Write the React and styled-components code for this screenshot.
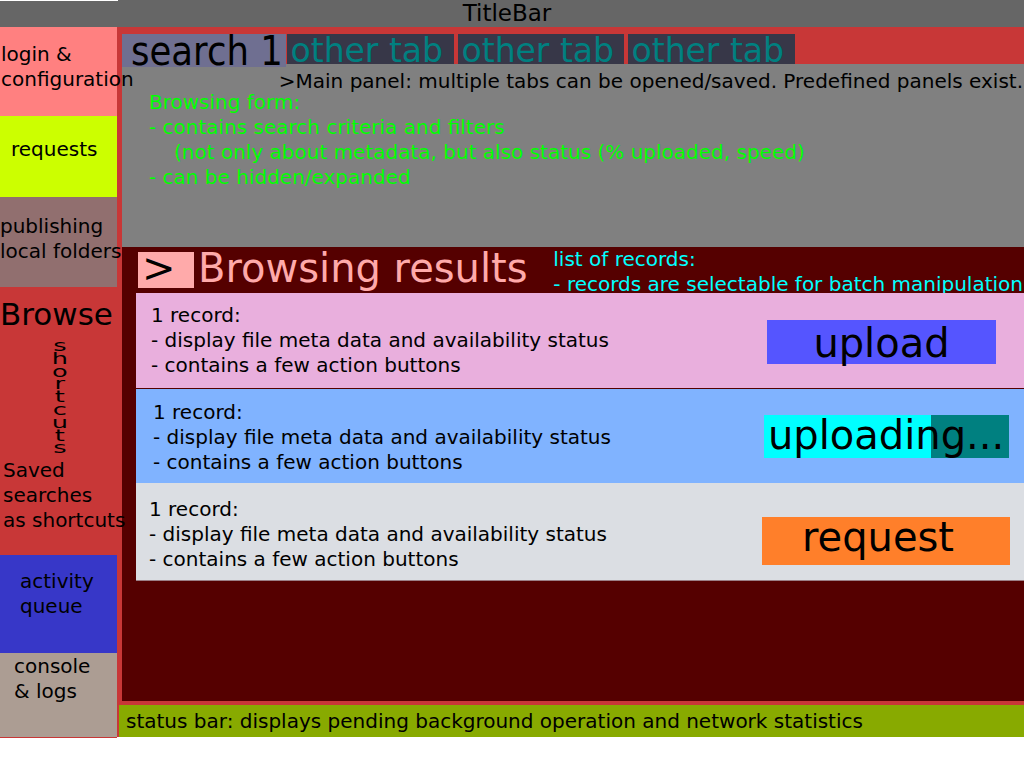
import React from 'react';
import styled, { createGlobalStyle } from 'styled-components';

const Global = createGlobalStyle`
  html, body { margin: 0; padding: 0; background: #ffffff; }
  body { font-family: "DejaVu Sans", "Noto Sans", sans-serif; color: #000; }
  * { box-sizing: border-box; }
`;

const Frame = styled.div`
  width: 1024px;
  display: flex;
  flex-direction: column;
`;

const TitleBar = styled.div`
  height: 27px;
  background: linear-gradient(#fff, #fff) 0 0 / 118px 1px no-repeat, #666666;
  text-align: center;
  padding-right: 10px;
  font-size: 23px;
  line-height: 27px;
`;

const Body = styled.div`
  display: flex;
  align-items: flex-start;
`;

const Sidebar = styled.div`
  width: 117px;
  flex-shrink: 0;
  display: flex;
  flex-direction: column;
  background: #c83737;
  border-bottom: 1px solid #c83737;
  position: relative;
  z-index: 2;
  font-size: 20px;
  line-height: 25px;
  white-space: nowrap;
`;

const SideSection = styled.div`
  height: ${p => p.$h}px;
  background: ${p => p.$bg || 'transparent'};
  padding: ${p => p.$pt || 0}px 0 0 ${p => p.$pl || 0}px;
  display: flex;
  flex-direction: column;
`;

const BrowseTitle = styled.div`
  font-size: 31px;
  line-height: 36px;
`;

const ShortcutsSlot = styled.div`
  height: 112px;
  margin-top: 7px;
  display: flex;
  justify-content: center;
`;

const Shortcuts = styled.div`
  writing-mode: vertical-rl;
  text-orientation: upright;
  font-size: 16px;
  line-height: 16px;
  letter-spacing: -6.2px;
  transform: scaleX(1.6);
  margin-top: -3px;
`;

const SavedNote = styled.div`
  margin-top: 7px;
  padding-left: 3px;
`;

const Main = styled.div`
  flex: 1;
  height: 710px;
  background: #c83737;
  padding: 7px 0 0 5px;
  display: flex;
  flex-direction: column;
`;

const TabRow = styled.div`
  height: 30px;
  flex-shrink: 0;
  display: flex;
  align-items: flex-start;
`;

const Tab = styled.div`
  width: ${p => p.$w}px;
  height: ${p => (p.$active ? 33 : 30)}px;
  margin-left: ${p => p.$ml || 0}px;
  background: ${p => (p.$active ? '#6f6f91' : '#373748')};
  color: ${p => (p.$active ? '#000000' : '#008080')};
  font-size: ${p => (p.$active ? 35.5 : 33)}px;
  line-height: 30px;
  padding: ${p => (p.$active ? '2px 0 0 9px' : '1.5px 0 0 3.5px')};
  white-space: nowrap;
  position: ${p => (p.$active ? 'relative' : 'static')};
  z-index: ${p => (p.$active ? 1 : 'auto')};
`;

const TabLabel = styled.span`
  display: inline-block;
  transform: scaleY(${p => p.$sy || 1});
`;

const FormPanel = styled.div`
  height: 183px;
  flex-shrink: 0;
  background: #808080;
  padding-top: 9px;
  font-size: 20px;
`;

const PanelNote = styled.div`
  line-height: 17px;
  text-align: right;
  padding-right: 1px;
  white-space: nowrap;
`;

const FormNotes = styled.div`
  color: #00ff00;
  line-height: 25px;
  padding-left: 27px;
  white-space: nowrap;
`;

const NoteLine = styled.div`
  padding-left: ${p => p.$indent || 0}px;
`;

const ResultsPanel = styled.div`
  flex: 1;
  background: #550000;
  padding-left: 14px;
  display: flex;
  flex-direction: column;
`;

const ResultsHeader = styled.div`
  height: 46px;
  flex-shrink: 0;
  display: flex;
  align-items: flex-start;
`;

const ToggleBox = styled.div`
  width: 56px;
  height: 36px;
  margin: 5px 0 0 2px;
  background: #ffaaaa;
  font-size: 40px;
  line-height: 33px;
  padding-left: 4px;
`;

const ResultsTitle = styled.div`
  color: #ffaaaa;
  font-size: 40px;
  line-height: 42px;
  margin-left: 4px;
  white-space: nowrap;
`;

const ListNote = styled.div`
  margin-left: auto;
  padding-right: 1px;
  color: #00ffff;
  font-size: 20px;
  line-height: 24.5px;
  white-space: nowrap;
`;

const RecordList = styled.div`
  display: flex;
  flex-direction: column;
`;

const Record = styled.div`
  height: ${p => p.$h}px;
  margin-bottom: ${p => p.$mb || 0}px;
  background: ${p => p.$bg};
  border-bottom: ${p => (p.$edge ? '1px solid #9c7f86' : 'none')};
  display: flex;
  align-items: flex-start;
  justify-content: space-between;
`;

const RecordText = styled.div`
  padding: ${p => p.$pt}px 0 0 ${p => p.$pl}px;
  font-size: 20px;
  line-height: 25px;
  white-space: nowrap;
`;

const ActionButton = styled.div`
  width: ${p => p.$w}px;
  height: ${p => p.$h}px;
  margin: ${p => p.$mt}px ${p => p.$mr}px 0 0;
  flex-shrink: 0;
  background: ${p =>
    p.$progress != null
      ? `linear-gradient(to right, #00ffff 0 ${p.$progress}%, #008080 ${p.$progress}% 100%)`
      : p.$bg};
  font-size: 40px;
  line-height: 40px;
  padding: ${p => p.$pt || 0}px ${p => p.$pr || 0}px 0 ${p => p.$pl || 0}px;
  text-align: ${p => p.$align || 'center'};
  white-space: nowrap;
`;

const StatusBar = styled.div`
  height: 32px;
  flex-shrink: 0;
  margin: 4px 0 0 -3px;
  background: #88aa00;
  font-size: 20px;
  line-height: 25px;
  padding: 4px 0 0 7px;
  white-space: nowrap;
`;

const RecordBody = () => (
  <>
    <div>1 record:</div>
    <div>- display file meta data and availability status</div>
    <div>- contains a few action buttons</div>
  </>
);

export default function App() {
  return (
    <Frame>
      <Global />
      <TitleBar>TitleBar</TitleBar>
      <Body>
        <Sidebar>
          <SideSection $h={89} $bg="#ff8080" $pt={15} $pl={1}>
            <div>login &amp;</div>
            <div>configuration</div>
          </SideSection>
          <SideSection $h={81} $bg="#ccff00" $pt={20.5} $pl={11}>
            <div>requests</div>
          </SideSection>
          <SideSection $h={90} $bg="#916f6f" $pt={17} $pl={0}>
            <div>publishing</div>
            <div>local folders</div>
          </SideSection>
          <SideSection $h={268} $pt={9} $pl={0}>
            <BrowseTitle>Browse</BrowseTitle>
            <ShortcutsSlot>
              <Shortcuts>shortcuts</Shortcuts>
            </ShortcutsSlot>
            <SavedNote>
              <div>Saved</div>
              <div>searches</div>
              <div>as shortcuts</div>
            </SavedNote>
          </SideSection>
          <SideSection $h={98} $bg="#3737c8" $pt={14} $pl={20}>
            <div>activity</div>
            <div>queue</div>
          </SideSection>
          <SideSection $h={84} $bg="#ac9d93" $pt={1} $pl={14}>
            <div>console</div>
            <div>&amp; logs</div>
          </SideSection>
        </Sidebar>
        <Main>
          <TabRow>
            <Tab $active $w={164}>
              <TabLabel $sy={1.15}>search 1</TabLabel>
            </Tab>
            <Tab $w={167} $ml={1}>other tab</Tab>
            <Tab $w={166} $ml={4}>other tab</Tab>
            <Tab $w={167} $ml={4}>other tab</Tab>
          </TabRow>
          <FormPanel>
            <PanelNote>&gt;Main panel: multiple tabs can be opened/saved. Predefined panels exist.</PanelNote>
            <FormNotes>
              <NoteLine>Browsing form:</NoteLine>
              <NoteLine>- contains search criteria and filters</NoteLine>
              <NoteLine $indent={25}>(not only about metadata, but also status (% uploaded, speed)</NoteLine>
              <NoteLine>- can be hidden/expanded</NoteLine>
            </FormNotes>
          </FormPanel>
          <ResultsPanel>
            <ResultsHeader>
              <ToggleBox>&gt;</ToggleBox>
              <ResultsTitle>Browsing results</ResultsTitle>
              <ListNote>
                <div>list of records:</div>
                <div>- records are selectable for batch manipulation</div>
              </ListNote>
            </ResultsHeader>
            <RecordList>
              <Record $h={95} $mb={1} $bg="#e9afdd">
                <RecordText $pt={10} $pl={15}>
                  <RecordBody />
                </RecordText>
                <ActionButton $w={229} $h={44} $mt={27} $mr={28} $bg="#5555ff" $pt={3}>
                  upload
                </ActionButton>
              </Record>
              <Record $h={94} $bg="#80b3ff">
                <RecordText $pt={10.6} $pl={17}>
                  <RecordBody />
                </RecordText>
                <ActionButton $w={245} $h={43} $mt={26} $mr={15} $progress={68} $align="left" $pl={4}>
                  uploading...
                </ActionButton>
              </Record>
              <Record $h={98} $bg="#dbdee3" $edge>
                <RecordText $pt={13.6} $pl={13}>
                  <RecordBody />
                </RecordText>
                <ActionButton $w={248} $h={48} $mt={34} $mr={14} $bg="#ff7f2a" $pr={16}>
                  request
                </ActionButton>
              </Record>
            </RecordList>
          </ResultsPanel>
          <StatusBar>status bar: displays pending background operation and network statistics</StatusBar>
        </Main>
      </Body>
    </Frame>
  );
}
